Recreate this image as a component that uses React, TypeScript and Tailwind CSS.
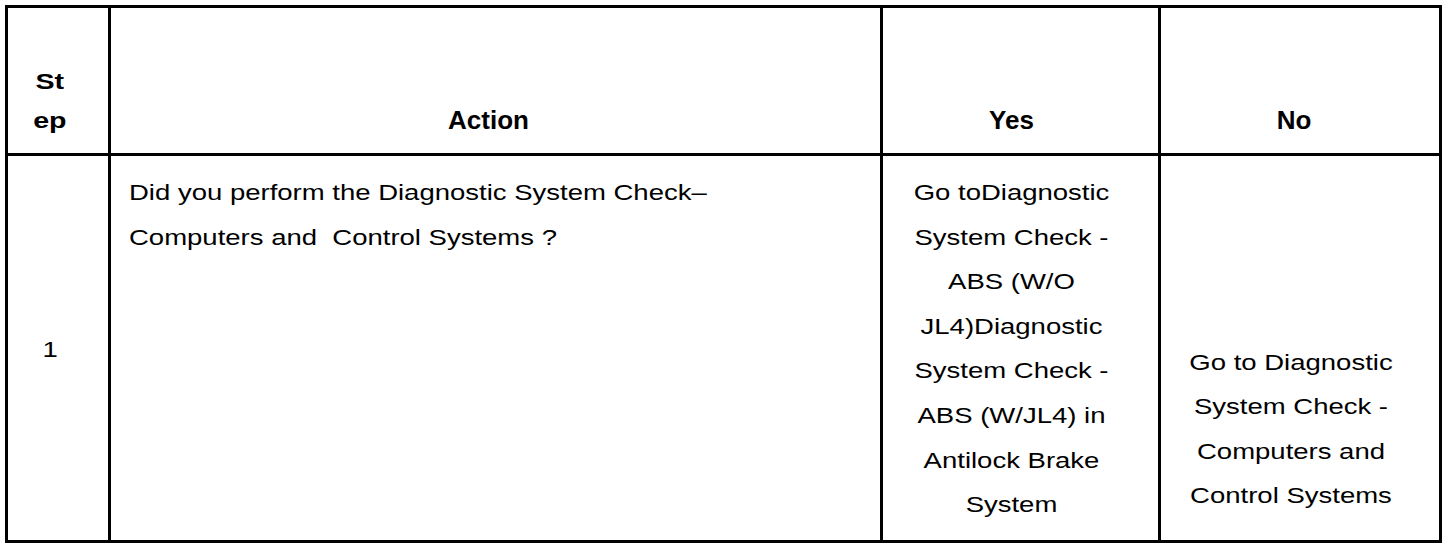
export default function App() {
  const font = "font-['Liberation_Sans',Arial,sans-serif] text-black";
  const body = "text-[22px] leading-[44.6px]";

  return (
    <div className={`w-[1456px] h-[552px] bg-white pt-[5px] pl-[5px] ${font}`}>
      <div className="w-[1437px] h-[538px] border-[3px] border-black grid grid-cols-[103px_772px_278px_278px] grid-rows-[148px_384px]">
        {/* header row */}
        <div className="border-r-[3px] border-b-[3px] border-black flex flex-col justify-end items-center pr-[16px] pb-[13px] text-[22px] leading-[39px] font-bold text-center">
          <span className="block scale-x-[1.3]">
            St
            <br />
            ep
          </span>
        </div>
        <div className="border-r-[3px] border-b-[3px] border-black flex flex-col justify-end items-center pr-[14px] pb-[18px] text-[26px] leading-[29px] font-bold">
          Action
        </div>
        <div className="border-r-[3px] border-b-[3px] border-black flex flex-col justify-end items-center pr-[18px] pb-[18px] text-[26px] leading-[29px] font-bold">
          Yes
        </div>
        <div className="border-b-[3px] border-black flex flex-col justify-end items-center pr-[12px] pb-[18px] text-[26px] leading-[29px] font-bold">
          No
        </div>

        {/* step 1 */}
        <div className={`border-r-[3px] border-black flex items-center justify-center pr-[16px] pt-[4px] ${body}`}>
          <span className="block scale-x-[1.25]">1</span>
        </div>
        <div className={`border-r-[3px] border-black pl-[18px] pt-[15px] ${body}`}>
          <span className="inline-block whitespace-nowrap origin-left scale-x-[1.25]">
            Did you perform the Diagnostic System Check–
            <br />
            Computers and&nbsp; Control Systems ?
          </span>
        </div>
        <div className={`border-r-[3px] border-black pr-[18px] pt-[15px] text-center ${body}`}>
          <span className="block scale-x-[1.25]">
            Go toDiagnostic
            <br />
            System Check -
            <br />
            ABS (W/O
            <br />
            JL4)Diagnostic
            <br />
            System Check -
            <br />
            ABS (W/JL4) in
            <br />
            Antilock Brake
            <br />
            System
          </span>
        </div>
        <div className={`flex flex-col justify-end pr-[18px] pb-[21px] text-center ${body}`}>
          <span className="block scale-x-[1.25]">
            Go to Diagnostic
            <br />
            System Check -
            <br />
            Computers and
            <br />
            Control Systems
          </span>
        </div>
      </div>
    </div>
  );
}
